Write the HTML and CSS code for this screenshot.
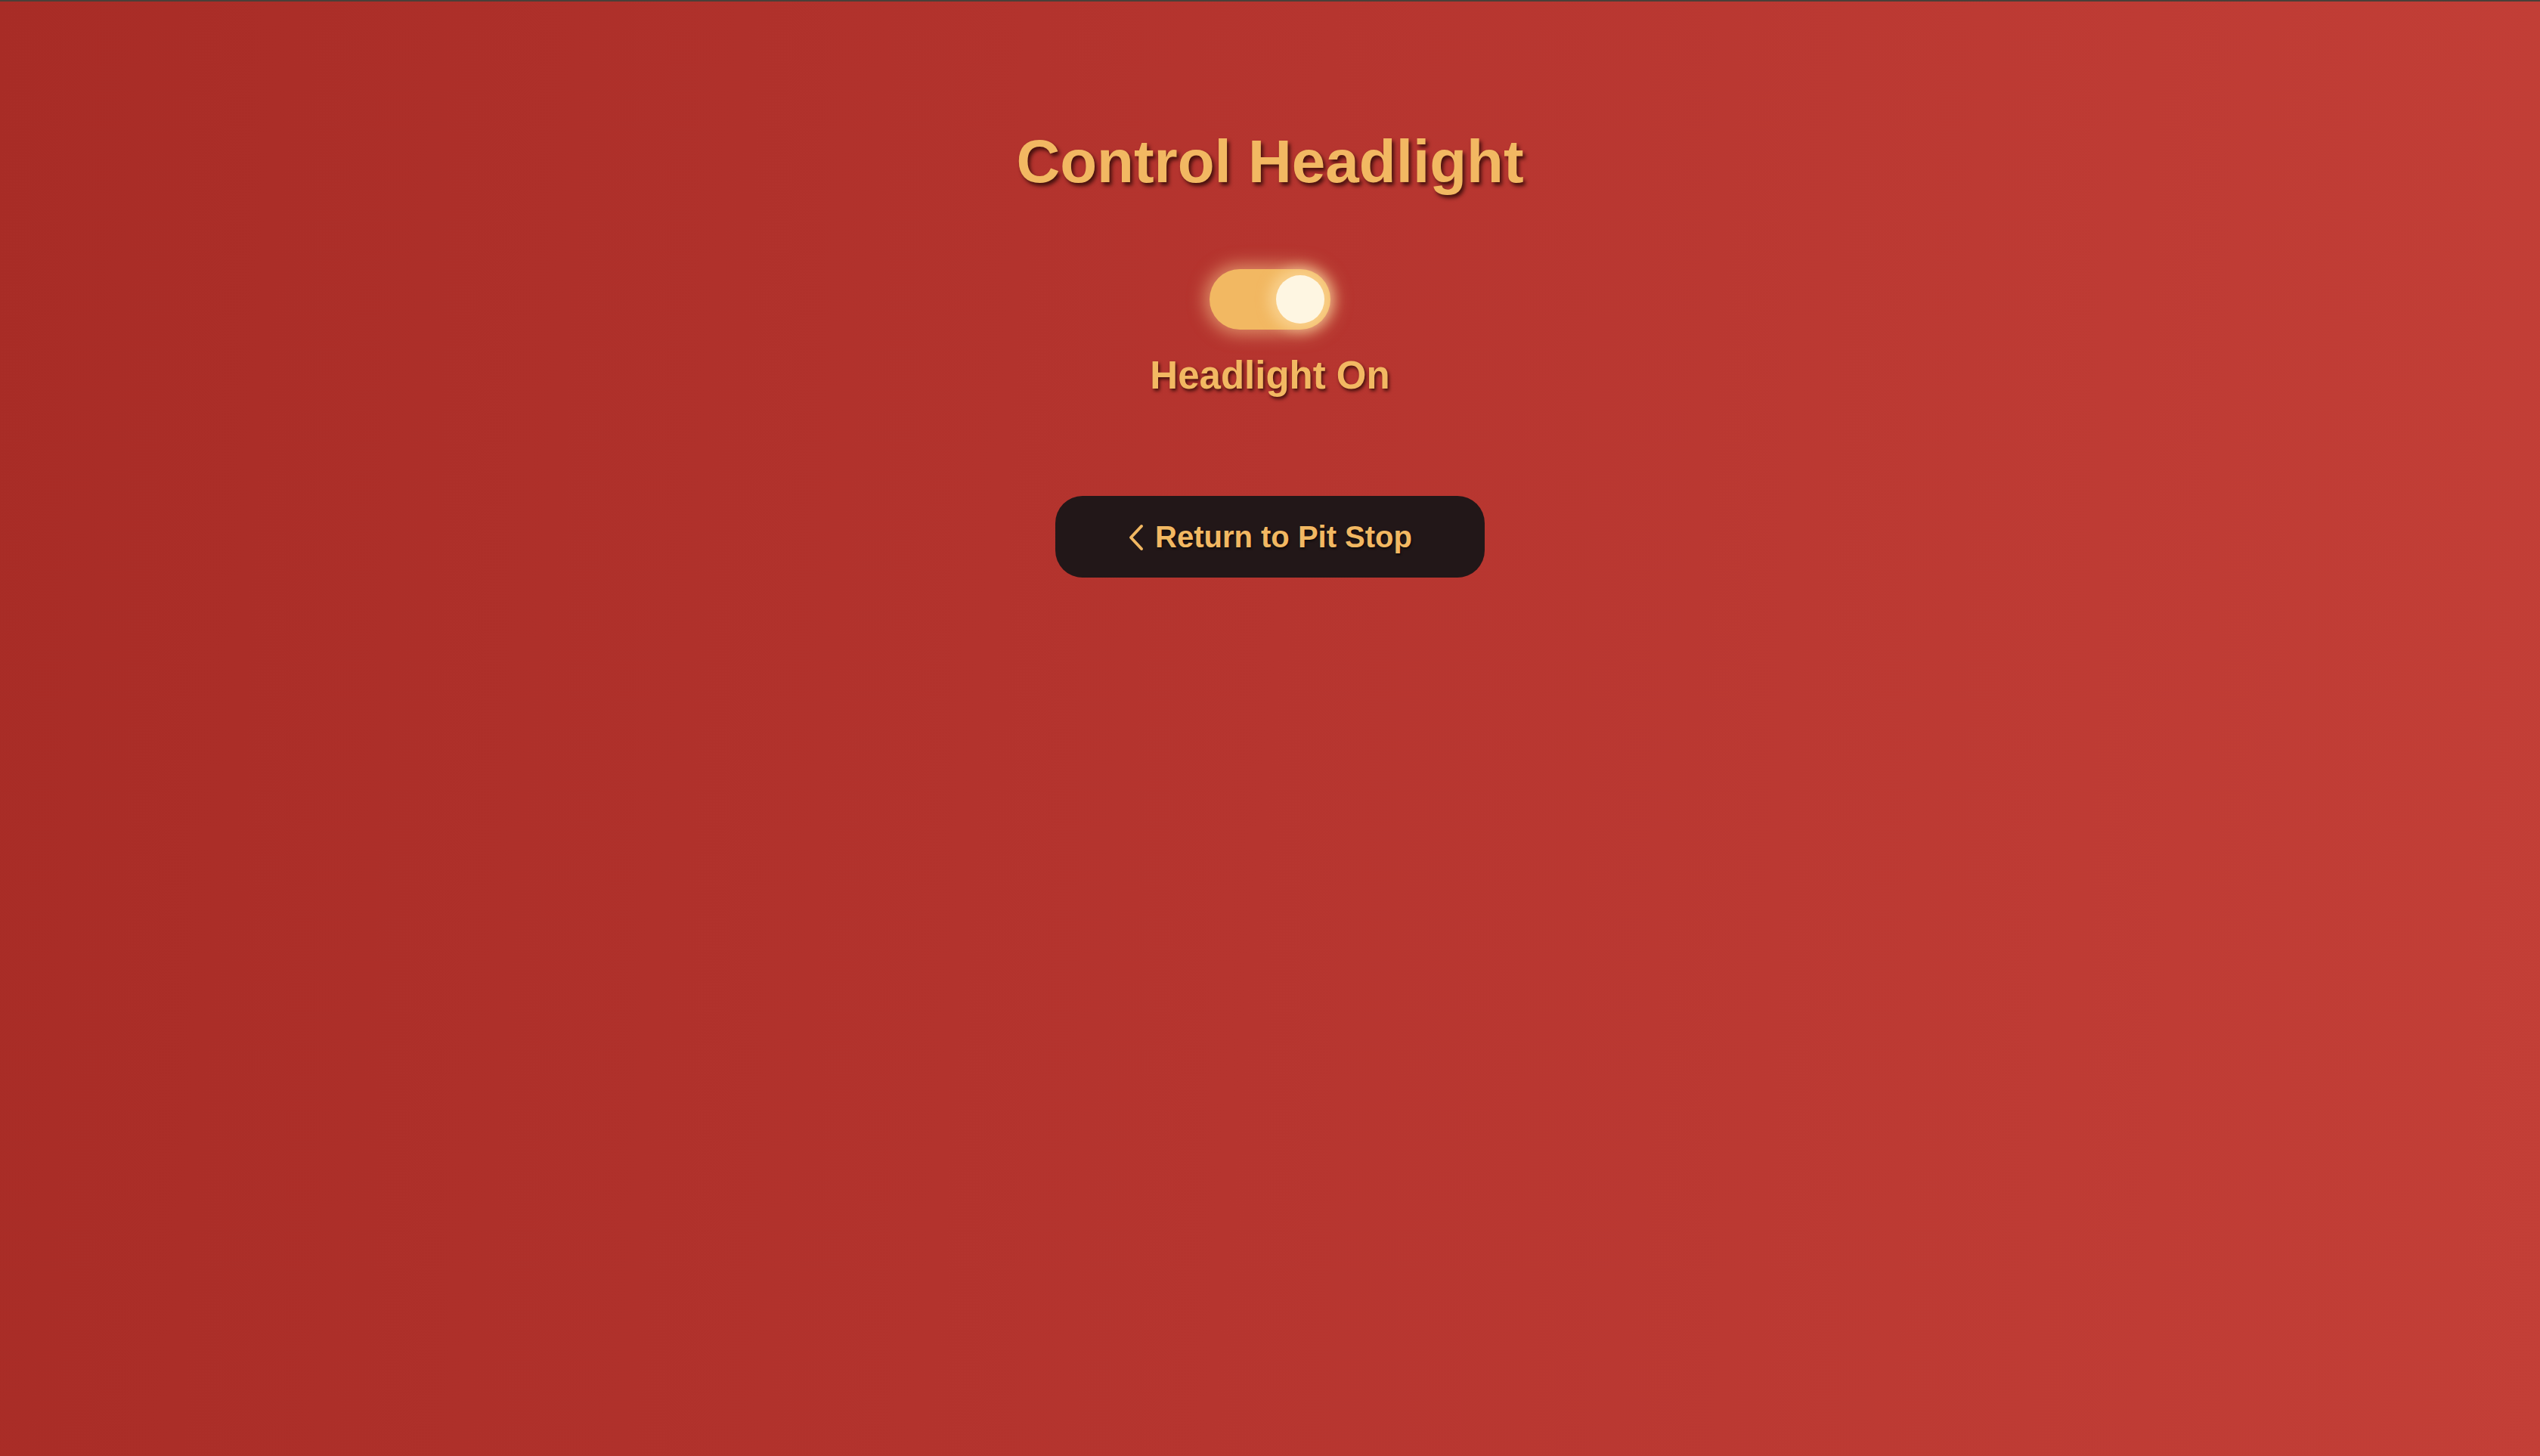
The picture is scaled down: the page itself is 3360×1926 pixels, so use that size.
FILE: index.html
```html
<!DOCTYPE html>
<html lang="en">
<head>
<meta charset="utf-8">
<title>Control Headlight</title>
<link rel="stylesheet" href="styles.css">
</head>
<body>
<main class="page">
  <h1 class="title">Control Headlight</h1>
  <div class="control">
    <button class="toggle" aria-pressed="true" aria-label="Headlight"><span class="knob"></span></button>
    <p class="status">Headlight On</p>
  </div>
  <a class="back" href="#">
    <svg class="chev" width="22" height="36" viewBox="0 0 22 36" aria-hidden="true"><path d="M18 3 L4 18 L18 33" fill="none" stroke="#f2b862" stroke-width="4" stroke-linecap="round" stroke-linejoin="round"/></svg>
    <span>Return to Pit Stop</span>
  </a>
</main>
</body>
</html>
```
FILE: styles.css
```css
html, body {
  margin: 0;
  padding: 0;
  height: 100%;
}
body {
  border-top: 2px solid #4a3f38;
  box-sizing: border-box;
  background: linear-gradient(95deg, #a82c26 0%, #b6352f 50%, #c33f37 100%);
  font-family: "Liberation Sans", Arial, sans-serif;
  color: #f2b862;
}
.page {
  display: flex;
  flex-direction: column;
  align-items: center;
  padding-top: 164px;
}
.title {
  margin: 0;
  font-size: 80px;
  line-height: 96px;
  font-weight: 700;
  color: #f2b862;
  text-shadow: 3px 4px 5px rgba(40, 8, 5, 0.8);
}
.control {
  display: flex;
  flex-direction: column;
  align-items: center;
  margin-top: 94px;
}
.toggle {
  position: relative;
  width: 160px;
  height: 80px;
  border: 0;
  padding: 0;
  border-radius: 40px;
  background: #f2b862;
  box-shadow: 0 0 22px 6px rgba(255, 214, 150, 0.55);
  display: flex;
  align-items: center;
  justify-content: flex-end;
  padding-right: 8px;
  box-sizing: border-box;
}
.knob {
  width: 64px;
  height: 64px;
  border-radius: 50%;
  background: #fef6e2;
  box-shadow: 0 0 16px 10px rgba(255, 226, 170, 0.55);
}
.status {
  margin: 31px 0 0;
  font-size: 51px;
  line-height: 60px;
  font-weight: 700;
  color: #f2b862;
  text-shadow: 2px 3px 4px rgba(40, 8, 5, 0.8);
}
.back {
  margin-top: 129px;
  width: 568px;
  height: 108px;
  box-sizing: border-box;
  border-radius: 36px;
  background: #221718;
  display: flex;
  align-items: center;
  justify-content: center;
  gap: 14px;
  text-decoration: none;
  color: #f2b862;
  font-size: 40px;
  font-weight: 700;
  text-shadow: 1px 2px 3px rgba(0, 0, 0, 0.6);
}
.chev {
  display: block;
  margin-top: 1px;
}
```
